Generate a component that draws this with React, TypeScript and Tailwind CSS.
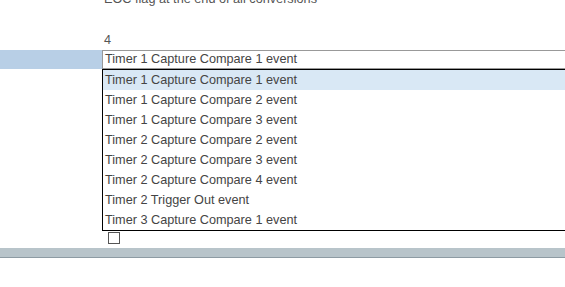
const options = [
  "Timer 1 Capture Compare 1 event",
  "Timer 1 Capture Compare 2 event",
  "Timer 1 Capture Compare 3 event",
  "Timer 2 Capture Compare 2 event",
  "Timer 2 Capture Compare 3 event",
  "Timer 2 Capture Compare 4 event",
  "Timer 2 Trigger Out event",
  "Timer 3 Capture Compare 1 event",
];

export default function App() {
  return (
    <div
      className="w-[565px] h-[287px] overflow-hidden bg-white text-[12.7px] leading-[16px] text-[#444]"
      style={{ fontFamily: '"Liberation Sans", Arial, sans-serif' }}
    >
      <div className="mt-[-9px] pl-[104px] text-[#555] whitespace-nowrap">
        EOC flag at the end of all conversions
      </div>
      <div className="mt-[25px] pl-[104px] text-[#555]">4</div>
      <div className="mt-[2px] flex w-[700px]">
        <div className="w-[102px] h-[19px] bg-[#b8cfe6] shrink-0" />
        <div className="flex-1 h-[19px] border border-[#999] border-r-0 pl-[2px] leading-[16px] whitespace-nowrap">
          {options[0]}
        </div>
      </div>
      <div className="ml-[102px] w-[600px] border border-black">
        {options.map((o, i) => (
          <div
            key={o}
            className={
              "h-[20px] pl-[2px] leading-[20px] whitespace-nowrap " +
              (i === 0 ? "bg-[#d9e8f5]" : "")
            }
          >
            {o}
          </div>
        ))}
      </div>
      <div className="ml-[108px] mt-[1px] w-[12px] h-[12px] border border-[#555]" />
      <div className="mt-[4px] h-[10px] bg-[#b8c4ca] border-b border-[#8d9ba3]" />
    </div>
  );
}
